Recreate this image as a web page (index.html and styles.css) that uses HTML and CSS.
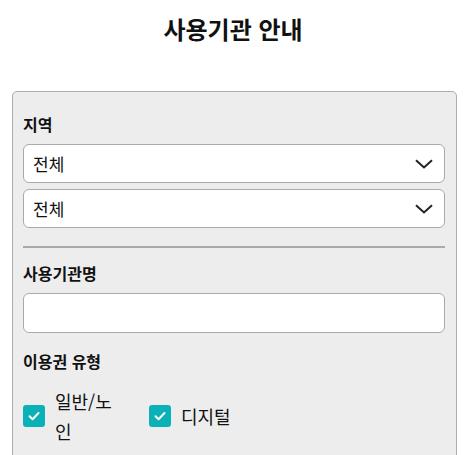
FILE: index.html
```html
<!DOCTYPE html>
<html lang="ko">
<head>
<meta charset="utf-8">
<link rel="stylesheet" href="styles.css">
</head>
<body>
<h1 class="title">사용기관 안내</h1>
<section class="panel">
  <div class="field">
    <div class="label">지역</div>
    <div class="select"><span>전체</span><svg class="chev" width="18" height="10" viewBox="0 0 18 10"><path d="M1 1.2 L9 8.5 L17 1.2" fill="none" stroke="#222" stroke-width="2"/></svg></div>
    <div class="select"><span>전체</span><svg class="chev" width="18" height="10" viewBox="0 0 18 10"><path d="M1 1.2 L9 8.5 L17 1.2" fill="none" stroke="#222" stroke-width="2"/></svg></div>
  </div>
  <hr class="divider">
  <div class="field">
    <div class="label">사용기관명</div>
    <div class="input"></div>
  </div>
  <div class="field">
    <div class="label">이용권 유형</div>
    <div class="checks">
      <div class="check">
        <span class="box"><svg width="22" height="22" viewBox="0 0 22 22"><path d="M6.5 11.2 L9.6 14.2 L15.5 8" fill="none" stroke="#fff" stroke-width="2" stroke-linecap="round" stroke-linejoin="round"/></svg></span>
        <span class="ctext narrow">일반/노인</span>
      </div>
      <div class="check">
        <span class="box"><svg width="22" height="22" viewBox="0 0 22 22"><path d="M6.5 11.2 L9.6 14.2 L15.5 8" fill="none" stroke="#fff" stroke-width="2" stroke-linecap="round" stroke-linejoin="round"/></svg></span>
        <span class="ctext">디지털</span>
      </div>
    </div>
  </div>
</section>
</body>
</html>
```

FILE: styles.css
```css
* { box-sizing: border-box; }
html, body { margin: 0; padding: 0; background: #fff; }
body {
  font-family: "Noto Sans CJK KR", "Noto Sans", sans-serif;
  color: #111;
  overflow: hidden;
}
.title {
  margin: 13px 0 46px;
  font-size: 24px;
  line-height: 32px;
  font-weight: 700;
  text-align: center;
}
.panel {
  margin-left: 12px;
  width: 445px;
  background: #ededed;
  border: 1px solid #adadad;
  border-radius: 5px;
  padding: 21px 11px 40px 10px;
}
.label {
  font-size: 16px;
  font-weight: 700;
  line-height: 22px;
  margin-bottom: 9px;
}
.select {
  height: 39px;
  background: #fff;
  border: 1px solid #aaa;
  border-radius: 6px;
  display: flex;
  align-items: center;
  justify-content: space-between;
  padding: 0 11px 0 9px;
  font-size: 17px;
  margin-bottom: 6px;
}
.select span { line-height: 22px; }
.chev { display: block; }
.divider {
  border: 0;
  height: 2px;
  background: #aaa;
  margin: 18px 0 14px;
}
.input {
  height: 40px;
  background: #fff;
  border: 1px solid #aaa;
  border-radius: 6px;
  margin-bottom: 17px;
}
.checks {
  display: flex;
  align-items: center;
  gap: 30px;
  margin-top: 14px;
}
.check {
  display: flex;
  align-items: center;
  gap: 10px;
}
.box {
  width: 22px;
  height: 22px;
  border-radius: 3px;
  background: #0ab2b7;
  display: block;
  flex: none;
}
.box svg { display: block; }
.ctext {
  font-size: 18px;
  line-height: 30px;
}
.ctext.narrow { width: 64px; }
```
